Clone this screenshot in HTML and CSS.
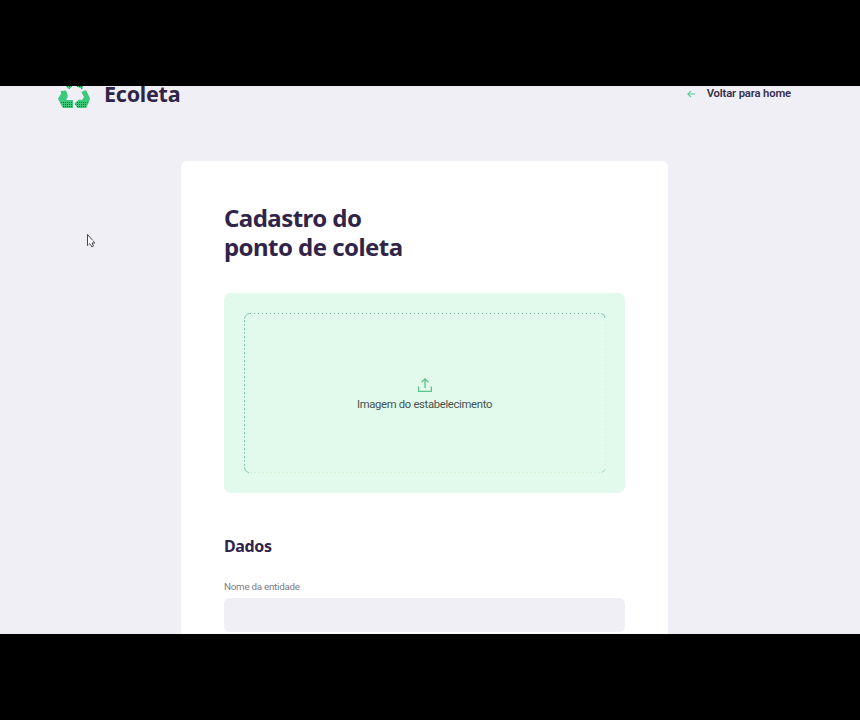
FILE: index.html
```html
<!DOCTYPE html>
<html lang="pt-BR">
<head>
<meta charset="utf-8">
<title>Ecoleta</title>
<link rel="stylesheet" href="styles.css">
</head>
<body>
<div class="viewport">
  <header class="topbar">
    <div class="brand">
      <svg class="logo" width="34" height="34" viewBox="0 0 34 34">
        <defs>
          <pattern id="dots" width="2" height="2" patternUnits="userSpaceOnUse"><rect width="1" height="1" fill="#0f5a40"/></pattern>
        </defs>
        <path fill="#39ca7b" d="M9 10.500L13 4h3l-1.500 7-2.500 2zM19 4h3l4 5-.5 4-6-2.500zM3.700 15L9 14.500 11 20 9 24H16V32H6Q4 29 1 22.500L4 18zM24.300 16L29 14 33 22.500Q32 27 29 32H20.500L17.500 27.500 22 23.500 25 24 27 21z"/>
        <path fill="url(#dots)" d="M4 25h12v7H6zM18 27.500L21 25H31L29 32H20.500zM10 10h5l-3 3zM19 10h7l-.5 3z"/>
      </svg>
      <span class="brand-name">Ecoleta</span>
    </div>
    <a class="back">
      <svg width="8" height="8" viewBox="0 0 8 8" fill="none" stroke="#55ce91" stroke-width="1.1"><path d="M8 4H1M4 .8L.8 4 4 7.2"/></svg>
      <span class="back-label">Voltar para home</span>
    </a>
  </header>
  <main class="card">
    <h1>Cadastro do<br>ponto de coleta</h1>
    <div class="dropzone">
      <svg class="outline" width="363" height="161" viewBox="0 0 363 161" fill="none">
        <path d="M6 .5H357" stroke="#72bd98" stroke-dasharray="1 3"/>
        <path d="M.5 7V154" stroke="#8acbaa" stroke-dasharray="2 2"/>
        <path d="M.5 6Q1 1 6 .5M357 .5Q361 1 361 5M.5 154Q1 159 5 159.500M358 159.500L361 156.500" stroke="#8acbaa"/>
        <path d="M361.500 7V154" stroke="#cdf3df" stroke-dasharray="1 3"/>
        <path d="M6 159.500H356" stroke="#d2f2d5" stroke-dasharray="2 2"/>
      </svg>
      <div class="upload">
        <svg width="14" height="14" viewBox="0 0 14 14" fill="none" stroke="#5bc48d" stroke-width="1.3"><path d="M.6 8.500V13.300H13.400V8.500M7 10V1M3.500 4.300L7 .9l3.500 3.400"/></svg>
        <span class="upload-label">Imagem do estabelecimento</span>
      </div>
    </div>
    <h2>Dados</h2>
    <label for="name">Nome da entidade</label>
    <input id="name" type="text">
  </main>
  <svg class="cursor" width="9" height="14" viewBox="0 0 9 14"><path d="M.5.500V11.500L3 9.500 5 13 6.500 12 5 9H8z" fill="#fff" stroke="#30303c" stroke-width=".9" stroke-dasharray="12 .8 1.500 .8"/></svg>
</div>
</body>
</html>
```
FILE: styles.css
```css
* { box-sizing: border-box; }
body {
  margin: 0;
  height: 720px;
  padding: 86px 0;
  background: #000;
  overflow: hidden;
  font-family: Roboto, sans-serif;
}
.viewport {
  position: relative;
  height: 548px;
  overflow: hidden;
  background: #f0eff5;
}
.topbar {
  display: flex;
  justify-content: space-between;
  align-items: center;
  height: 34px;
  margin-top: -10px;
  padding: 0 69px 0 57px;
}
.brand { display: flex; align-items: center; gap: 13px; }
.logo { display: block; }
.brand-name, h1, h2 {
  font-family: "Noto Sans", sans-serif;
  font-weight: 700;
  color: #302449;
}
.brand-name { font-size: 21.500px; line-height: 36px; letter-spacing: -.25px; padding-top: 1px; }
.back { display: flex; align-items: center; gap: 12px; padding-top: 1px; }
.back-label {
  font-size: 11.300px;
  line-height: 34px;
  font-weight: 600;
  letter-spacing: -.16px;
  color: #38304d;
  white-space: nowrap;
}
.card {
  width: 487px;
  height: 600px;
  margin: 51px 0 0 181px;
  padding: 42px 43px 43px;
  background: #fff;
  border-radius: 6px;
}
h1 { margin: 0; font-size: 24px; line-height: 29px; letter-spacing: -.55px; white-space: nowrap; }
.dropzone {
  position: relative;
  display: flex;
  justify-content: center;
  height: 200px;
  width: 401px;
  margin-top: 32px;
  padding-top: 85px;
  background: #e1faec;
  border-radius: 7px;
}
.outline { position: absolute; left: 20px; top: 20px; }
.upload { display: flex; flex-direction: column; align-items: center; gap: 6px; }
.upload-label { font-size: 11.300px; line-height: 14px; letter-spacing: -.33px; color: #47534f; white-space: nowrap; }
h2 { margin: 41px 0 0; font-size: 16px; line-height: 24px; letter-spacing: -.35px; }
label { display: block; margin-top: 22px; font-size: 9.800px; line-height: 14px; letter-spacing: -.26px; color: #7c7b87; }
input {
  display: block;
  width: 401px;
  height: 34px;
  margin-top: 4px;
  border: 0;
  border-radius: 6px;
  background: #f0eff5;
}
.cursor { position: absolute; left: 87px; top: 148px; }
```
